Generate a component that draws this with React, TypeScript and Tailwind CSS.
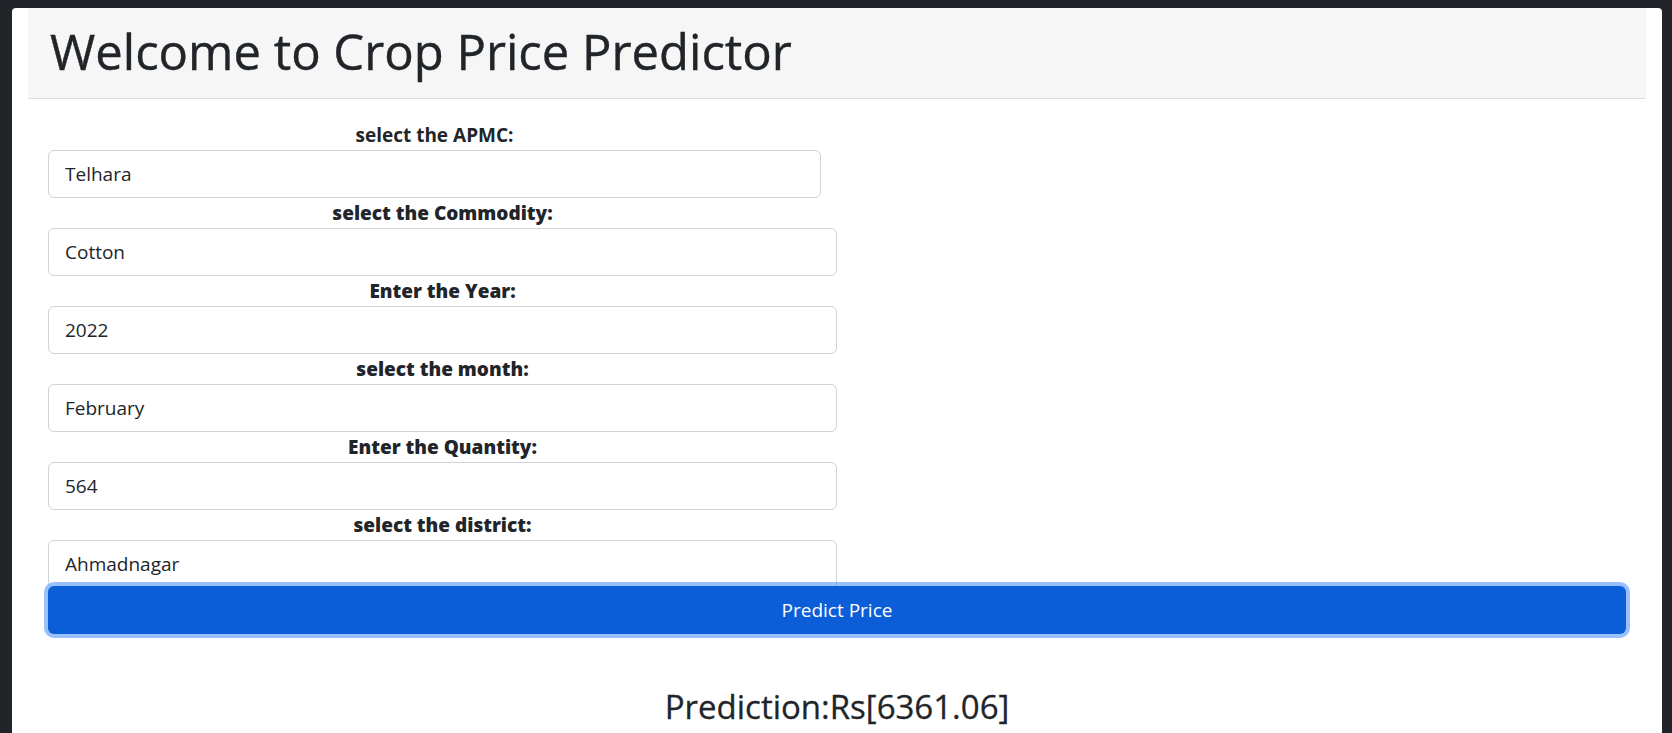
const fields = [
	{ label: "select the APMC:", value: "Telhara", width: "w-[773px]", weight: "font-bold" },
	{ label: "select the Commodity:", value: "Cotton", width: "w-[789px]", weight: "font-extrabold" },
	{ label: "Enter the Year:", value: "2022", width: "w-[789px]", weight: "font-extrabold" },
	{ label: "select the month:", value: "February", width: "w-[789px]", weight: "font-extrabold" },
	{ label: "Enter the Quantity:", value: "564", width: "w-[789px]", weight: "font-extrabold" },
	{ label: "select the district:", value: "Ahmadnagar", width: "w-[789px]", weight: "font-extrabold" },
]

function App() {

	return (

		<div className="min-h-screen bg-[#212529] pl-[12px] pr-[10px] pt-[8px] font-['Open_Sans',sans-serif] text-[#212529]">

			<div className="min-h-[725px] rounded-t-[4px] bg-white px-[16px]">

				<header className="h-[91px] border-b border-[#dcdcdc] bg-[#f6f6f6] pl-[22px]">
					<h1 className="pt-[11px] text-[49px] leading-[64px] [-webkit-text-stroke:0.4px_#212529]">Welcome to Crop Price Predictor</h1>
				</header>

				<form className="px-[20px] pt-[21px]">

					{fields.map((f) => (
						<div key={f.label} className={f.width}>
							<label className={`block h-[30px] text-center text-[19px] leading-[30px] ${f.weight}`}>{f.label}</label>
							<input
								readOnly
								value={f.value}
								className="block h-[48px] w-full rounded-[6px] border border-[#ced4da] bg-white px-[16px] text-[19px] text-[#212529] outline-none"
							/>
						</div>
					))}

					<button
						type="button"
						className="relative -mt-[2px] block h-[48px] w-full rounded-[6px] bg-[#0b5ed7] text-[19px] text-white shadow-[0_0_0_4px_rgba(49,132,253,0.5)]"
					>
						Predict Price
					</button>

					<h2 className="mt-[49px] text-center text-[33px] leading-[48px] [-webkit-text-stroke:0.3px_#212529]">Prediction:Rs[6361.06]</h2>
				</form>
			</div>
		</div>
	);
}

export default App
